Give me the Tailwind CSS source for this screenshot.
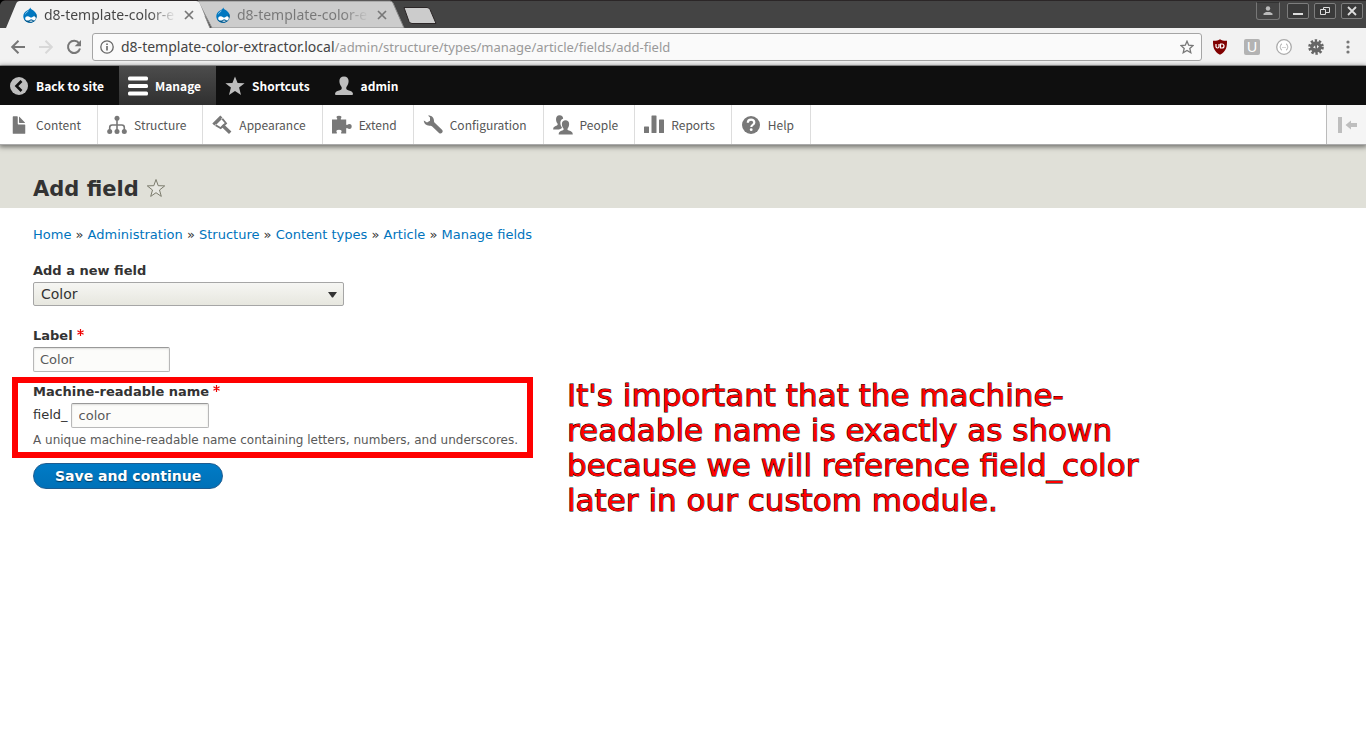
<!DOCTYPE html>
<html lang="en">
<head>
<meta charset="utf-8">
<title>Add field | d8-template-color-extractor</title>
<script src="https://cdn.jsdelivr.net/npm/@tailwindcss/browser@4"></script>
</head>
<body class="min-h-screen overflow-x-hidden bg-white font-['DejaVu_Sans',sans-serif] text-[13px] text-[#333]">

<svg class="hidden" aria-hidden="true">
  <symbol id="drop" viewBox="0 0 16 16">
    <path fill="#0077c0" d="M8.2.4c.6 1.4 1.700 2 2.900 2.900 2 1.400 3.500 3.200 3.500 6 0 3.800-2.900 6.500-6.600 6.500S1.300 12.900 1.300 9.300C1.300 6.800 2.700 5 4.700 3.700 6 2.900 7.700 2.200 8.200.4z"/>
    <path fill="#00598e" d="M14 6.500c.4.900.6 1.800.6 2.800 0 3.800-2.900 6.500-6.600 6.500-2.500 0-4.700-1.300-5.800-3.200 5 1.700 10.800-.3 11.800-6.100z"/>
    <path fill="#a9d6ee" d="M7 3.300C5.600 4.500 3.300 5.300 2.600 8.300c1-2 3-2.800 4.400-5z"/>
    <path fill="#fff" d="M5.700 9.200c1.700 0 2.600 1.500 3.500 1.400.9-.1 1.700-1.400 2.900-1.400 1 0 1.700.8 1.700 2s-.8 2.200-1.700 2.200c-1.200 0-1.900-1.200-2.900-1.200-1.200 0-1.900 1.400-3.700 1.400-1.300 0-2.300-.9-2.300-2.200s1.100-2.200 2.500-2.200zM7 14.100c1.500-.8 3-.8 4 0-1 .9-3 .9-4 0z"/>
  </symbol>
  <symbol id="close" viewBox="0 0 10 10"><path d="M1 1l8 8M9 1L1 9" fill="none" stroke="currentColor" stroke-width="1.700"/></symbol>
  <symbol id="required" viewBox="0 0 14 14"><path d="M7 0v14M.9 3.500l12.200 7M13.100 3.500L.9 10.500" fill="none" stroke="#e00" stroke-width="2.400"/></symbol>
</svg>

<header class="font-['Noto_Sans',sans-serif]">
  <!-- Tab strip -->
  <div class="relative flex h-7 items-stretch bg-linear-to-b from-[#2b2627] from-[1px] to-[#444] to-[1px]">
    <svg class="absolute inset-0 h-7 w-[440px]" viewBox="0 0 440 28" aria-hidden="true">
      <path d="M0 0h5Q1 1 0 5z" fill="#000"/>
      <path d="M198 1H390q2 0 3 2l11 25H212z" fill="#ccc" stroke="#8a8a8a"/>
      <path d="M6 28L16 4q1-3 4-3H196q3 0 4 3l10 24z" fill="#f2f2f2"/>
      <path d="M205 16l5 12" stroke="#8a8a8a" fill="none"/>
      <path d="M404 7.500h23q2 0 3 2l6 14h-24q-2 0-3-2z" fill="#ccc" stroke="#2b2627"/>
    </svg>
    <div class="relative flex h-7 w-[193px] items-center pl-[22px] pt-[2px]">
      <svg class="size-4 shrink-0"><use href="#drop"/></svg>
      <span class="mb-[2px] ml-[6px] w-[132px] shrink-0 whitespace-nowrap bg-linear-to-r from-[#444] from-80% to-transparent bg-clip-text text-[14px] text-transparent">d8-template-color-e</span>
      <button class="ml-2 text-[#777]" aria-label="Close tab"><svg class="size-[10px]"><use href="#close"/></svg></button>
    </div>
    <div class="relative flex h-7 w-[193px] items-center pl-[22px] pt-[2px]">
      <svg class="size-4 shrink-0"><use href="#drop"/></svg>
      <span class="mb-[2px] ml-[6px] w-[132px] shrink-0 whitespace-nowrap bg-linear-to-r from-[#777] from-80% to-transparent bg-clip-text text-[14px] text-transparent">d8-template-color-e</span>
      <button class="ml-2 text-[#777]" aria-label="Close tab"><svg class="size-[10px]"><use href="#close"/></svg></button>
    </div>
    <div class="relative ml-auto flex items-start gap-[5px] pr-[3px] pt-[2px]">
      <button class="mr-[2px] flex h-[18px] w-6 items-center justify-center rounded-b-[3px] border border-[#777] border-t-[#333]" aria-label="Profile">
        <svg class="size-3" viewBox="0 0 12 12" fill="#bbb"><circle cx="6" cy="3.500" r="2.200"/><path d="M1.500 10V8.500L4 7h4l2.500 1.500V10z"/></svg>
      </button>
      <button class="mt-[1px] flex h-4 w-[22px] items-center justify-center rounded-[2px] border border-[#7d7d7d] bg-[#3a3a3a]" aria-label="Minimize">
        <svg class="size-3" viewBox="0 0 12 12"><path d="M1 8h10v2H1z" fill="#ddd"/></svg>
      </button>
      <button class="mt-[1px] flex h-4 w-[22px] items-center justify-center rounded-[2px] border border-[#7d7d7d] bg-[#3a3a3a]" aria-label="Restore">
        <svg class="size-3" viewBox="0 0 12 12" fill="none" stroke="#ddd"><path d="M1.500 4.500h5v5h-5zM4.500 4V2.500h6v5H7"/></svg>
      </button>
      <button class="mt-[1px] flex h-4 w-[22px] items-center justify-center rounded-[2px] border border-[#7d7d7d] bg-[#3a3a3a]" aria-label="Close">
        <svg class="size-3" viewBox="0 0 12 12" stroke="#ddd" stroke-width="1.800"><path d="M2 2l8 8M10 2l-8 8"/></svg>
      </button>
    </div>
  </div>

  <!-- Address bar -->
  <div class="flex h-[38px] items-center border-b border-[#aaa] bg-[#f2f2f2] px-[10px]">
    <button class="mr-3 text-[#777]" aria-label="Back"><svg class="size-4" viewBox="0 0 16 16" fill="none" stroke="currentColor" stroke-width="2"><path d="M15 8H2.500M8.500 1.700L2.200 8l6.300 6.300"/></svg></button>
    <button class="mr-3 text-[#d8d8d8]" aria-label="Forward"><svg class="size-4" viewBox="0 0 16 16" fill="none" stroke="currentColor" stroke-width="2"><path d="M1 8h12.500M7.500 1.700L13.800 8l-6.300 6.300"/></svg></button>
    <button class="mr-[10px] text-[#777]" aria-label="Reload"><svg class="size-4" viewBox="0 0 16 16"><path d="M13 4.200A6.100 6.100 0 1 0 14 9.500" fill="none" stroke="currentColor" stroke-width="2"/><path d="M15 1v6.300H8.700z" fill="currentColor"/></svg></button>
    <div class="flex h-7 grow items-center rounded-[3px] border border-[#a5a5a5] bg-[#fafafa] px-[7px]">
      <svg class="mr-[7px] size-[14px]" viewBox="0 0 14 14"><circle cx="7" cy="7" r="6.200" fill="none" stroke="#666" stroke-width="1.300"/><path d="M6.200 6h1.600v4.500H6.200zM6.200 3.400h1.600V5H6.200z" fill="#666"/></svg>
      <div class="grow whitespace-nowrap text-[13px] text-[#999]"><span class="text-[14px] text-[#444]">d8-template-color-extractor.local</span>/admin/structure/types/manage/article/fields/add-field</div>
      <button aria-label="Bookmark this page"><svg class="size-[14px]" viewBox="0 0 14 14"><path d="M7 1.200l1.700 4 4.300.4-3.200 2.800 1 4.300L7 10.400l-3.800 2.300 1-4.300L1 5.600l4.300-.4z" fill="none" stroke="#777" stroke-width="1.300"/></svg></button>
    </div>
    <div class="ml-[10px] flex items-center gap-4">
      <button aria-label="uBlock Origin"><svg class="size-4" viewBox="0 0 16 16"><path d="M8 .3c2 1.300 4.300 1.700 7 1.500 0 6-.5 10.500-7 14C1.500 12.300 1 7.800 1 1.800c2.700.2 5-.2 7-1.500z" fill="#800000"/><path d="M4 5v2.500q0 1.500 1.500 1.500T7 7.500V5M8.500 9V5H10a2 2 0 0 1 0 4z" fill="none" stroke="#fff" stroke-width="1.200"/></svg></button>
      <button class="flex size-4 items-center justify-center rounded-[2px] bg-[#b3b3b3] font-['Liberation_Sans',sans-serif] text-[14px] leading-4 text-white" aria-label="U extension">U</button>
      <button aria-label="JSON extension"><svg class="size-4" viewBox="0 0 16 16"><circle cx="8" cy="8" r="7.300" fill="#fff" stroke="#aaa" stroke-width="1.300"/><path d="M6 5q-1.300 0-1.300 1.300T3.800 8q.9.400.9 1.700T6 11M10 5q1.300 0 1.300 1.300t.9 1.700q-.9.400-.9 1.700T10 11M6.500 8.500h1M8.500 8.500h1" fill="none" stroke="#aaa"/></svg></button>
      <button aria-label="Settings extension"><svg class="size-4" viewBox="0 0 16 16"><circle cx="8" cy="8" r="6" fill="none" stroke="#666" stroke-width="3.600" stroke-dasharray="2.200 1.570"/><circle cx="8" cy="8" r="5.800" fill="#666"/><path d="M5 8.500l2-2 .5 3zM9 6l2 1.500-2 2z" fill="#eee"/></svg></button>
      <button aria-label="Menu"><svg class="size-4" viewBox="0 0 16 16" fill="#777"><circle cx="8" cy="3" r="1.600"/><circle cx="8" cy="8" r="1.600"/><circle cx="8" cy="13" r="1.600"/></svg></button>
    </div>
  </div>
</header>

<nav class="relative font-['Noto_Sans_CJK_SC',sans-serif] text-[12px] leading-[18px] shadow-[0_1px_5px_1px_rgba(0,0,0,0.5)]" aria-label="Administration">
  <div class="flex h-[39px] bg-[#0f0f0f] font-bold text-white">
    <a href="#" class="flex items-center px-[9px] pr-[15px]"><svg class="mr-[7px] size-5" viewBox="0 0 20 20"><circle cx="10" cy="10" r="9" fill="#bebebe"/><path d="M12.500 5L7.500 10l5 5" fill="none" stroke="#0f0f0f" stroke-width="2.600"/></svg>Back to site</a>
    <a href="#" class="flex items-center bg-linear-to-b from-[#4c4c4c] to-[#303030] pl-[9px] pr-[15px]"><svg class="mr-[7px] size-5" viewBox="0 0 20 20" fill="#fff"><rect y="0.500" width="20" height="4" rx="1.500"/><rect y="8" width="20" height="4" rx="1.500"/><rect y="15.500" width="20" height="4" rx="1.500"/></svg>Manage</a>
    <a href="#" class="flex items-center pl-[9px] pr-[15px]"><svg class="mr-[7px] size-5" viewBox="0 0 20 20"><path d="M10 .4l2.600 6.600 7 .3-5.500 4.300 1.900 7.300L10 15l-6 3.900 1.900-7.300L.4 7.300l7-.3z" fill="#bebebe"/></svg>Shortcuts</a>
    <a href="#" class="flex items-center pl-[9px] pr-[15px]"><svg class="mr-[7px] size-5" viewBox="0 0 20 20"><path d="M10 .5c3 0 4.600 1.800 4.600 4.600 0 2.300-.9 4.300-2 5.600-.6.800-.5 2.500.5 3 2.200 1 5 1.400 5.700 3.300.3.800.2 2-.6 2H1.800c-.8 0-.9-1.200-.6-2 .7-1.900 3.500-2.300 5.700-3.300 1-.5 1.100-2.200.5-3-1.100-1.300-2-3.300-2-5.600C5.400 2.300 7 .5 10 .5z" fill="#bebebe"/></svg>admin</a>
  </div>
  <div class="flex h-[40px] border-b border-[#aaa] bg-white text-[#565656]">
    <a href="#" class="flex items-center border-r border-[#ddd] pl-[9px] pr-4"><svg class="mr-[7px] size-5" viewBox="0 0 16 16" fill="#787878"><path d="M12.500 7.500h-5c-.3 0-.5-.2-.5-.5V1.500c0-.3-.2-.5-.5-.5h-3c-.3 0-.5.200-.5.500v13c0 .3.200.5.500.5h9c.3 0 .5-.2.500-.5V8c0-.3-.2-.5-.5-.5z"/><path d="M8.500 6.300h4.100c.3 0 .3-.2.100-.4L8.500 1.600C8.300 1.400 8 1.500 8 1.800v4c0 .3.200.5.500.5z"/></svg>Content</a>
    <a href="#" class="flex items-center border-r border-[#ddd] pl-[9px] pr-4"><svg class="mr-[7px] size-5" viewBox="0 0 20 20" fill="#787878"><circle cx="10" cy="3.200" r="2.500"/><circle cx="2.700" cy="16.500" r="2.500"/><circle cx="10" cy="16.500" r="2.500"/><circle cx="17.300" cy="16.500" r="2.500"/><path d="M10 3v13M2.700 16v-3.500q0-2.500 2.500-2.500h9.600q2.500 0 2.500 2.500V16" fill="none" stroke="#787878" stroke-width="1.600"/></svg>Structure</a>
    <a href="#" class="flex items-center border-r border-[#ddd] pl-[9px] pr-4"><svg class="mr-[7px] size-5" viewBox="0 0 20 20" fill="#787878"><path d="M8.300.5L.3 8.600l2.600 2.500L11 3zM10.300 2.300l5 6.200-6.500 5.800L2.300 10.500l1.500-1.300 4.700 2.900 4.200-4-3.500-4.200z"/><path d="M11.500 9l7.900 7.600-2.400 2.500-7.800-7.700z"/></svg>Appearance</a>
    <a href="#" class="flex items-center border-r border-[#ddd] pl-[9px] pr-4"><svg class="mr-[7px] size-5" viewBox="0 0 20 20" fill="#787878"><path d="M0 4.500h4.600c.7 0 .9-.8.400-1.300C4 2 4.500.7 7 .7s3 1.300 2 2.500c-.5.500-.3 1.300.4 1.300h4.800v4.800c0 .7.700.9 1.200.4C17 8.500 19.700 8.800 19.700 11.500S17 14.500 15.400 13.300c-.5-.5-1.200-.3-1.200.4v4.800H9.700c-.7 0-.9-.8-.4-1.300.8-1.200.2-2.500-2.300-2.500s-3.100 1.300-2.300 2.500c.5.500.3 1.300-.4 1.300H0z"/></svg>Extend</a>
    <a href="#" class="flex items-center border-r border-[#ddd] pl-[9px] pr-4"><svg class="mr-[7px] size-5" viewBox="0 0 20 20" fill="#787878"><path d="M5 .6c3.500-.3 6 2 6 5.200 0 1 .2 1.600 1 2.300l7 6.600c2 2.200-.7 5-3 3.300l-6.800-6.600c-.7-.7-1.300-.8-2.300-.7C3.500 11 .8 8.500.8 5.500L4 7.400 7 5.800V2.500z"/></svg>Configuration</a>
    <a href="#" class="flex items-center border-r border-[#ddd] pl-[9px] pr-4"><svg class="mr-[7px] size-5" viewBox="0 0 20 20" fill="#787878"><path d="M6.600.3c2.500 0 3.600 1.500 3.500 3.500-2 .7-2.900 2.300-2.700 4.700.1 1.900.9 3 1.600 4.200-.3.900-1.700 1.200-2.900 1.700H.2c-.3-2.500 2-3.200 3.700-3.900.9-.4 1-1.400.4-2.200C2.400 6 2.200.3 6.600.3z"/><path d="M12.500 5.300c4.500 0 4.300 5.500 2.300 8-.6.900-.4 1.600.4 2 1.700.8 4.700 1 4.600 4.200H5.700c-.1-3.200 2.500-3.400 4.200-4.200.8-.4 1-1.100.4-2-2-2.500-2.300-8 2.200-8z"/></svg>People</a>
    <a href="#" class="flex items-center border-r border-[#ddd] pl-[9px] pr-4"><svg class="mr-[7px] size-5" viewBox="0 0 20 20" fill="#787878"><rect y="11.500" width="5" height="6.500" rx="0.500"/><rect x="7.500" y="0.500" width="5" height="17.500" rx="0.500"/><rect x="15" y="4.500" width="5" height="13.500" rx="0.500"/></svg>Reports</a>
    <a href="#" class="flex items-center border-r border-[#ddd] pl-[9px] pr-4"><svg class="mr-[7px] size-5" viewBox="0 0 20 20"><circle cx="10" cy="10" r="9" fill="#787878"/><path d="M6.800 7.800c0-2 1.400-3.200 3.300-3.200s3.200 1.100 3.200 2.800c0 2.400-3 2.300-3 4.700" fill="none" stroke="#fff" stroke-width="2.200"/><circle cx="10.200" cy="14.700" r="1.400" fill="#fff"/></svg>Help</a>
    <button class="ml-auto flex w-10 items-center justify-center border-l border-[#bbb] bg-[#f5f5f5]" aria-label="Vertical orientation"><svg class="size-5" viewBox="0 0 20 20" fill="#bebebe"><path d="M1 2h4v16H1zM8.500 10L14 5.500V8h6v4h-6v2.500z"/></svg></button>
  </div>
</nav>

<div class="flex h-[63px] items-end bg-[#e0e0d8] pb-[5px] pl-[33px]">
  <h1 class="text-[21px] leading-7 font-bold">Add field</h1>
  <button class="mb-[5px] ml-[7px]" aria-label="Add to shortcuts"><svg class="size-5" viewBox="0 0 20 20"><path d="M10 1.500l2.200 6.200 6.500.2-5.200 4.100 1.800 6.400L10 14.700l-5.300 3.700 1.800-6.400L1.300 7.900l6.500-.2z" fill="#e8e8e2" stroke="#7b7b6c"/></svg></button>
</div>

<main class="px-[33px] pt-[17px]">
  <nav class="leading-5 text-[#333]" aria-label="Breadcrumb">
    <a href="#" class="text-[#0074bd]">Home</a> »
    <a href="#" class="text-[#0074bd]">Administration</a> »
    <a href="#" class="text-[#0074bd]">Structure</a> »
    <a href="#" class="text-[#0074bd]">Content types</a> »
    <a href="#" class="text-[#0074bd]">Article</a> »
    <a href="#" class="text-[#0074bd]">Manage fields</a>
  </nav>

  <form class="mt-4">
    <label for="type" class="block leading-5 font-bold">Add a new field</label>
    <div class="relative mt-[1px] w-[311px]">
      <select id="type" class="block h-6 w-full appearance-none rounded-[2px] border border-[#a6a6a6] bg-linear-to-b from-[#f6f6f3] to-[#e7e7df] pl-[7px] text-[14px] leading-5 text-[#333]"><option>Color</option></select>
      <svg class="pointer-events-none absolute right-[7px] top-[10px] h-[6px] w-[9px]" viewBox="0 0 9 6"><path d="M0 0h9L5 5.500H4z" fill="#333"/></svg>
    </div>

    <label for="label" class="mt-5 flex gap-1 leading-5 font-bold">Label <svg class="mt-[3px] size-[7px]" role="img" aria-label="required"><use href="#required"/></svg></label>
    <input id="label" type="text" value="Color" class="mt-[1px] block h-[25px] w-[137px] rounded-[2px] border border-[#b8b8b8] border-t-[#999] bg-[#fcfcfa] px-[6px] text-[13px] text-[#595959] shadow-[inset_0_1px_2px_rgba(0,0,0,0.13)]">

    <div class="relative mt-[5px] -ml-[21px] w-[521px] border-6 border-[#f00] pb-[2px] pl-[15px]">
      <label for="machine" class="-mt-[1px] flex gap-1 leading-5 font-bold">Machine-readable name <svg class="mt-[3px] size-[7px]" role="img" aria-label="required"><use href="#required"/></svg></label>
      <div class="mt-[1px] flex items-start gap-[3px]">
        <span class="leading-6">field_</span>
        <input id="machine" type="text" value="color" class="h-[25px] w-[138px] rounded-[2px] border border-[#b8b8b8] border-t-[#999] bg-[#fcfcfa] px-[7px] text-[13px] text-[#595959] shadow-[inset_0_1px_2px_rgba(0,0,0,0.13)]">
      </div>
      <p class="mt-[2px] text-[12px] leading-5 whitespace-nowrap text-[#595959]">A unique machine-readable name containing letters, numbers, and underscores.</p>
      <p class="absolute -top-[5px] left-[549px] w-[600px] text-[31px] leading-[35px] text-[#f00] [-webkit-text-stroke:1px_#000] [paint-order:stroke_fill]">It's important that the machine-<br>readable name is exactly as shown<br>because we will reference field_color<br>later in our custom module.</p>
    </div>

    <button type="button" class="mt-[5px] h-[26px] rounded-full border border-[#1e5c90] bg-linear-to-b from-[#007bc6] to-[#0071b8] px-[21px] text-[14px] leading-5 font-bold text-white [text-shadow:0_1px_1px_rgba(0,0,0,0.5)]">Save and continue</button>
  </form>
</main>
</body>
</html>
